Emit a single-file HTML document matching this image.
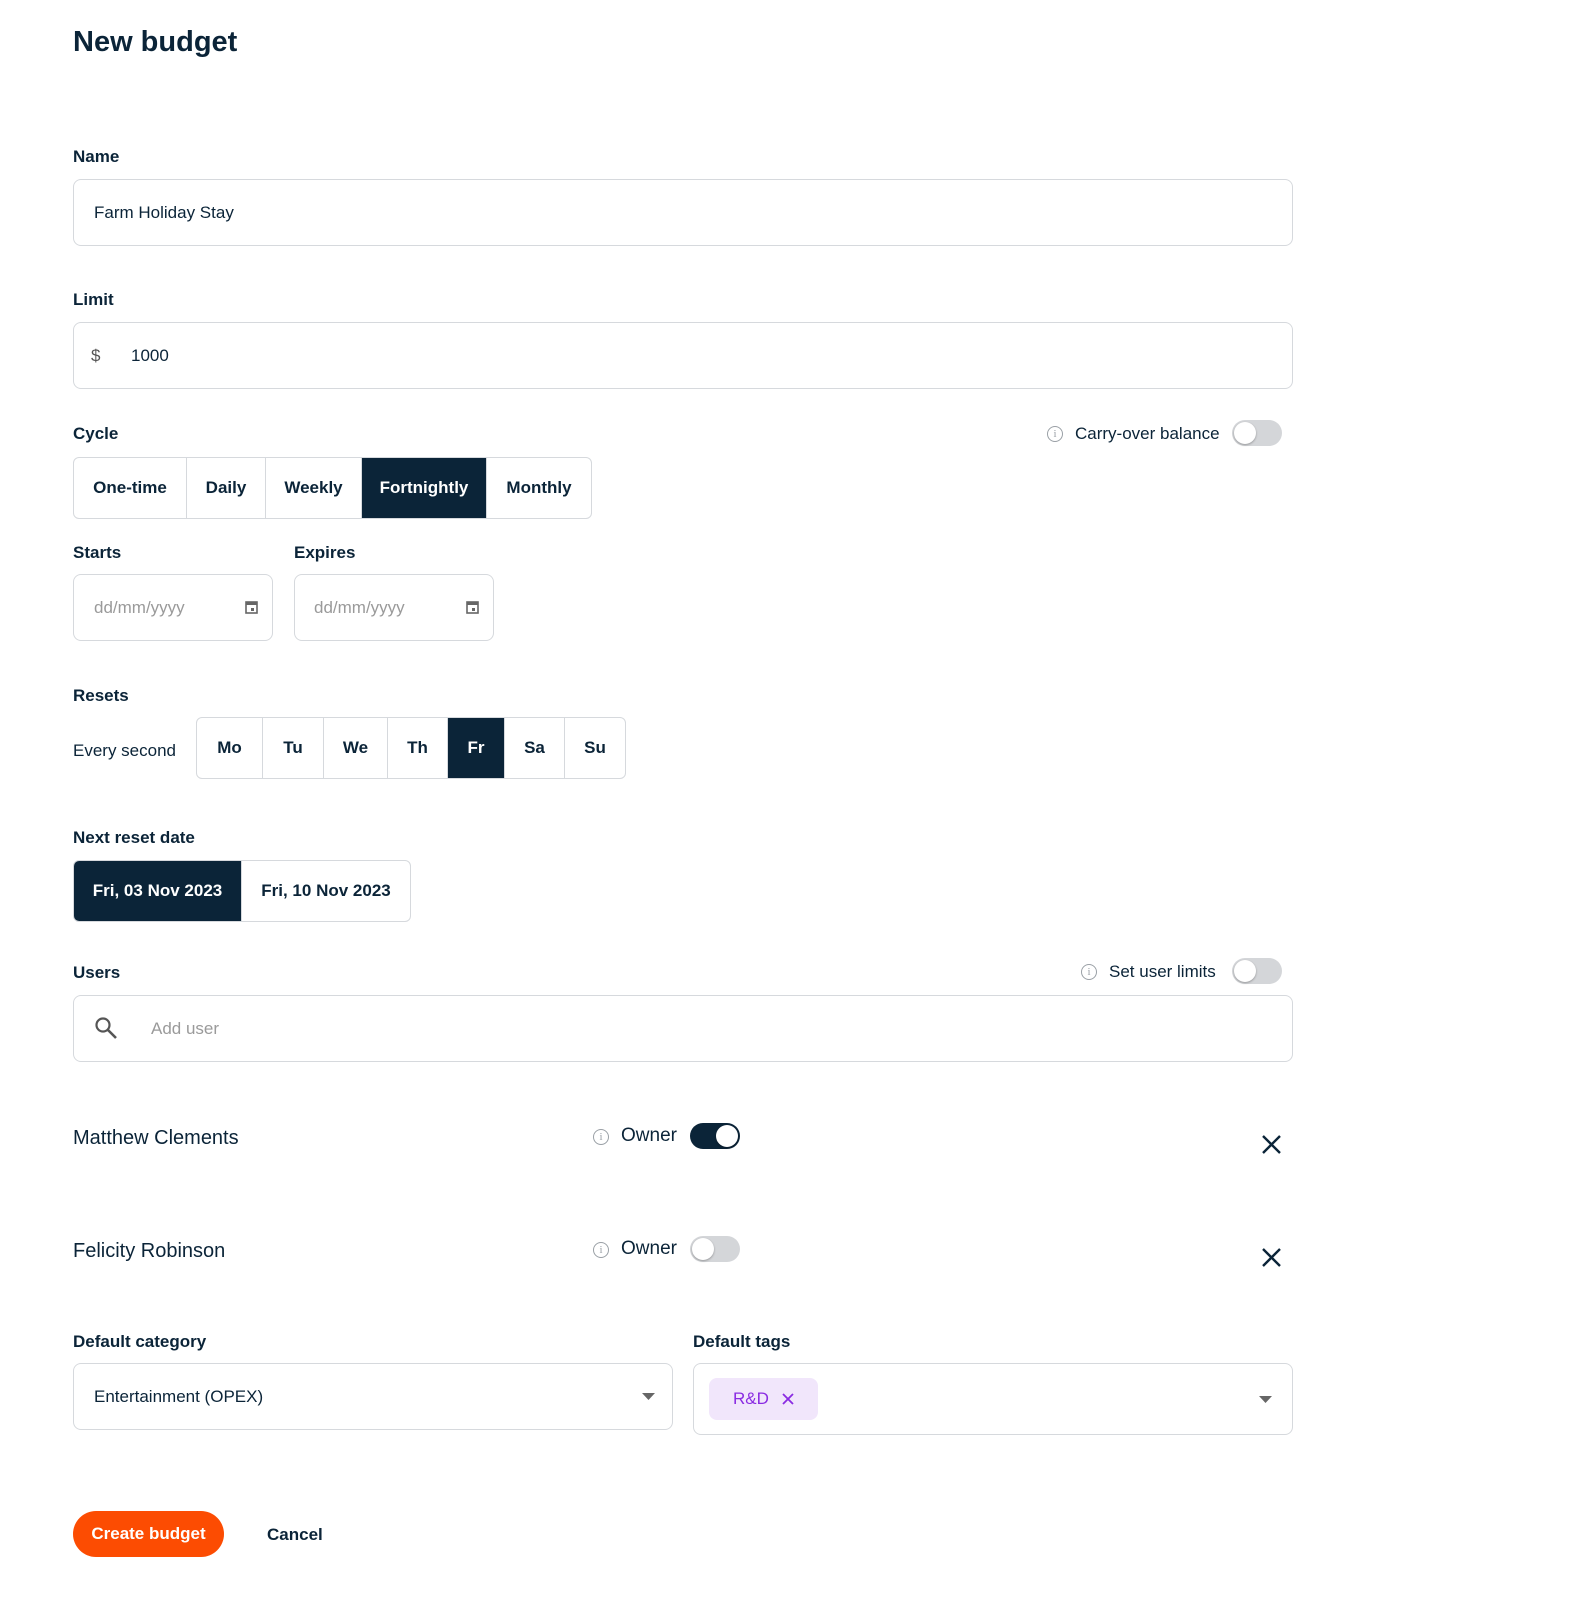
<!DOCTYPE html>
<html><head><meta charset="utf-8"><style>
*{box-sizing:border-box;margin:0;padding:0}
body{width:1572px;height:1600px;background:#fff;font-family:"Liberation Sans",sans-serif;color:#0b2438;position:relative;overflow:hidden}
.a{position:absolute}
.lbl{position:absolute;font-size:17px;font-weight:bold;color:#0b2438}
.inp{position:absolute;border:1px solid #d6d9dd;border-radius:8px;background:#fff}
.seg{position:absolute;display:flex;border:1px solid #d6d9dd;border-radius:6px;overflow:hidden}
.seg div{display:flex;align-items:center;justify-content:center;font-size:17px;font-weight:bold;color:#0b2438;border-right:1px solid #d6d9dd;height:100%}
.seg div:last-child{border-right:none}
.seg .on{background:#0b2438;color:#fff}
.tog{position:absolute;width:50px;height:26px;border-radius:13px;background:#d4d6d9}
.tog::after{content:"";position:absolute;left:2px;top:2px;width:22px;height:22px;border-radius:50%;background:#fff;box-shadow:0 1px 2px rgba(0,0,0,.3)}
.tog.on{background:#0b2438}
.tog.on::after{left:26px}
.info{position:absolute;width:16px;height:16px;border:1.3px solid #9aa0a6;border-radius:50%;font-size:11px;color:#9aa0a6;text-align:center;line-height:14px;font-family:"Liberation Serif",serif}
</style></head><body>
<div class="a" style="left:73px;top:26px;font-size:29px;font-weight:bold">New budget</div>

<div class="lbl" style="left:73px;top:147px">Name</div>
<div class="inp" style="left:73px;top:179px;width:1220px;height:67px"></div>
<div class="a" style="left:94px;top:203px;font-size:17px">Farm Holiday Stay</div>

<div class="lbl" style="left:73px;top:290px">Limit</div>
<div class="inp" style="left:73px;top:322px;width:1220px;height:67px"></div>
<div class="a" style="left:91px;top:346px;font-size:17px;color:#555">$</div>
<div class="a" style="left:131px;top:346px;font-size:17px">1000</div>

<div class="lbl" style="left:73px;top:424px">Cycle</div>
<div class="info" style="left:1047px;top:426px">i</div>
<div class="a" style="left:1075px;top:424px;font-size:17px">Carry-over balance</div>
<div class="tog" style="left:1232px;top:420px"></div>
<div class="seg" style="left:73px;top:457px;height:62px">
<div style="width:113px">One-time</div><div style="width:79px">Daily</div><div style="width:96px">Weekly</div><div class="on" style="width:125px">Fortnightly</div><div style="width:104px">Monthly</div></div>

<div class="lbl" style="left:73px;top:543px">Starts</div>
<div class="lbl" style="left:294px;top:543px">Expires</div>
<div class="inp" style="left:73px;top:574px;width:200px;height:67px"></div>
<div class="inp" style="left:294px;top:574px;width:200px;height:67px"></div>
<div class="a" style="left:94px;top:598px;font-size:17px;color:#9a9a9a">dd/mm/yyyy</div>
<div class="a" style="left:314px;top:598px;font-size:17px;color:#9a9a9a">dd/mm/yyyy</div>
<svg class="a" style="left:245px;top:600px" width="13" height="14"><rect x="1" y="2" width="11" height="11" fill="none" stroke="#666" stroke-width="1.6"/><rect x="1" y="2" width="11" height="3" fill="#666"/><rect x="6" y="8" width="3" height="3" fill="#666"/></svg>
<svg class="a" style="left:466px;top:600px" width="13" height="14"><rect x="1" y="2" width="11" height="11" fill="none" stroke="#666" stroke-width="1.6"/><rect x="1" y="2" width="11" height="3" fill="#666"/><rect x="6" y="8" width="3" height="3" fill="#666"/></svg>

<div class="lbl" style="left:73px;top:686px">Resets</div>
<div class="a" style="left:73px;top:741px;font-size:17px">Every second</div>
<div class="seg" style="left:196px;top:717px;height:62px">
<div style="width:66px">Mo</div><div style="width:61px">Tu</div><div style="width:64px">We</div><div style="width:60px">Th</div><div class="on" style="width:57px">Fr</div><div style="width:60px">Sa</div><div style="width:60px">Su</div></div>

<div class="lbl" style="left:73px;top:828px">Next reset date</div>
<div class="seg" style="left:73px;top:860px;height:62px">
<div class="on" style="width:168px">Fri, 03 Nov 2023</div><div style="width:168px">Fri, 10 Nov 2023</div></div>

<div class="lbl" style="left:73px;top:963px">Users</div>
<div class="info" style="left:1081px;top:964px">i</div>
<div class="a" style="left:1109px;top:962px;font-size:17px">Set user limits</div>
<div class="tog" style="left:1232px;top:958px"></div>
<div class="inp" style="left:73px;top:995px;width:1220px;height:67px"></div>
<svg class="a" style="left:94px;top:1016px" width="24" height="24"><circle cx="9" cy="9" r="6.5" fill="none" stroke="#555" stroke-width="2.2"/><path d="M14 14L22 22" stroke="#555" stroke-width="2.6"/></svg>
<div class="a" style="left:151px;top:1019px;font-size:17px;color:#9a9a9a">Add user</div>

<div class="a" style="left:73px;top:1127px;font-size:20px">Matthew Clements</div>
<div class="info" style="left:593px;top:1129px">i</div>
<div class="a" style="left:621px;top:1125px;font-size:19px">Owner</div>
<div class="tog on" style="left:690px;top:1123px"></div>
<svg class="a" style="left:1261px;top:1134px" width="21" height="21"><path d="M2 2L19 19M19 2L2 19" stroke="#0b2438" stroke-width="2.4"/></svg>

<div class="a" style="left:73px;top:1240px;font-size:20px">Felicity Robinson</div>
<div class="info" style="left:593px;top:1242px">i</div>
<div class="a" style="left:621px;top:1238px;font-size:19px">Owner</div>
<div class="tog" style="left:690px;top:1236px"></div>
<svg class="a" style="left:1261px;top:1247px" width="21" height="21"><path d="M2 2L19 19M19 2L2 19" stroke="#0b2438" stroke-width="2.4"/></svg>

<div class="lbl" style="left:73px;top:1332px">Default category</div>
<div class="lbl" style="left:693px;top:1332px">Default tags</div>
<div class="inp" style="left:73px;top:1363px;width:600px;height:67px"></div>
<div class="a" style="left:94px;top:1387px;font-size:17px">Entertainment (OPEX)</div>
<svg class="a" style="left:642px;top:1393px" width="14" height="8"><path d="M0 0H13L6.5 7Z" fill="#666"/></svg>
<div class="inp" style="left:693px;top:1363px;width:600px;height:72px"></div>
<div class="a" style="left:709px;top:1378px;width:109px;height:42px;background:#f1e6fb;border-radius:8px"></div>
<div class="a" style="left:733px;top:1389px;font-size:17px;color:#8a2be2">R&amp;D</div>
<svg class="a" style="left:781px;top:1392px" width="14" height="14"><path d="M2 2L12 12M12 2L2 12" stroke="#8a2be2" stroke-width="1.8"/></svg>
<svg class="a" style="left:1259px;top:1396px" width="14" height="8"><path d="M0 0H13L6.5 7Z" fill="#666"/></svg>

<div class="a" style="left:73px;top:1511px;width:151px;height:46px;border-radius:23px;background:#fc4c02;color:#fff;font-size:17px;font-weight:bold;display:flex;align-items:center;justify-content:center">Create budget</div>
<div class="a" style="left:267px;top:1525px;font-size:17px;font-weight:bold">Cancel</div>
</body></html>
